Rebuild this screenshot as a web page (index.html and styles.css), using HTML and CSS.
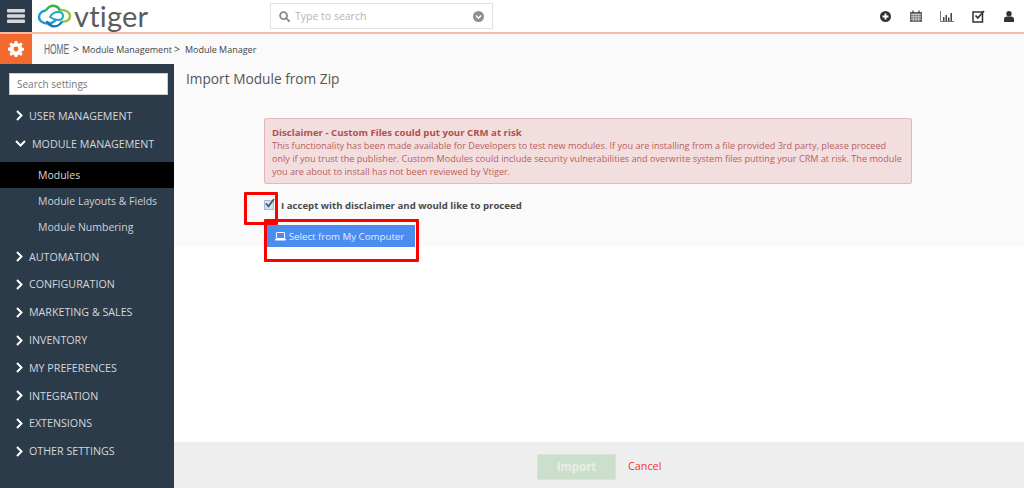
FILE: index.html
```html
<!DOCTYPE html>
<html lang="en">
<head>
<meta charset="utf-8">
<title>Import Module from Zip</title>
<link rel="stylesheet" href="styles.css">
</head>
<body>
<header class="topbar">
  <button class="menu-btn" aria-label="Menu">
    <svg width="18" height="14" viewBox="0 0 18 14"><path d="M1 0h16a1 1 0 0 1 1 1v1.500a1 1 0 0 1-1 1H1a1 1 0 0 1-1-1V1a1 1 0 0 1 1-1zM1 5.200h16a1 1 0 0 1 1 1v1.500a1 1 0 0 1-1 1H1a1 1 0 0 1-1-1V6.200a1 1 0 0 1 1-1zM1 10.400h16a1 1 0 0 1 1 1v1.500a1 1 0 0 1-1 1H1a1 1 0 0 1-1-1v-1.500a1 1 0 0 1 1-1z" fill="#d5d9dc"/></svg>
  </button>
  <div class="logo">
    <svg width="35" height="26" viewBox="0 0 35 26" fill="none" stroke-width="2.400">
      <path d="M9 7.500C5 8 2 10.500 2 14c0 4 4 6.500 9 6.500 3 0 6-1.500 8-4" stroke="#1c9ad6"/>
      <path d="M9 7.500C11 3.500 15 2 18 3c3 .8 4.500 3 5 5" stroke="#37b34a"/>
      <path d="M23 7c5-.5 10 2 10 6 0 4-4 6-8 5.500" stroke="#8cc63f"/>
      <path d="M25 18.500c-2 3.500-6 5.500-10 4.500-3-.8-4.500-3-5-5" stroke="#1279b8"/>
      <path d="M13 14c2-3.500 5-5 8-5 3 0 5 1.500 5 4s-2 4-5 4c-3 0-5-1-8-3z" stroke="#23a5c9" stroke-width="2"/>
    </svg>
    <span class="logo-text">vtiger</span>
  </div>
  <div class="global-search">
    <svg width="11" height="11" viewBox="0 0 12 12" fill="none" stroke="#8a8a8a" stroke-width="2"><circle cx="5" cy="5" r="3.800"/><path d="M8 8l3.200 3.200" stroke-linecap="round"/></svg>
    <span class="search-hint">Type to search</span>
    <svg class="search-caret" width="11" height="11" viewBox="0 0 12 12"><circle cx="6" cy="6" r="6" fill="#8f8f8f"/><path d="M3.200 5l2.800 2.800L8.800 5" fill="none" stroke="#fff" stroke-width="1.600"/></svg>
  </div>
  <nav class="top-icons">
    <svg width="11" height="11" viewBox="0 0 12 12"><circle cx="6" cy="6" r="6" fill="#333"/><path d="M6 2.800v6.400M2.800 6h6.400" stroke="#fff" stroke-width="2"/></svg>
    <svg width="12" height="12" viewBox="0 0 12 12"><path d="M0 2h12v10H0z" fill="#666"/><path d="M1 4.500h10M1 6.800h10M1 9.100h10M3.200 3.500v8M6 3.500v8M8.800 3.500v8" stroke="#ddd" stroke-width=".8"/><path d="M3 .5v2.500M9 .5v2.500" stroke="#333" stroke-width="1.200"/></svg>
    <svg width="14" height="11" viewBox="0 0 14 11"><path d="M.5 0v10.500H14" fill="none" stroke="#777" stroke-width="1"/><path d="M3 6h1.500v4H3zM5.500 4H7v6H5.500zM8 6.500h1.500V10H8zM10.500 2H12v8h-1.500z" fill="#444"/></svg>
    <svg width="13" height="13" viewBox="0 0 13 13"><path d="M1 2h9.500v10H1z" fill="none" stroke="#333" stroke-width="1.500"/><path d="M3.500 5.500l2.300 2.500L12 1" fill="none" stroke="#333" stroke-width="1.800"/></svg>
    <svg width="10" height="11" viewBox="0 0 10 11"><circle cx="5" cy="2.800" r="2.700" fill="#333"/><path d="M0 11V8c0-1.700 1.500-2.600 2.800-2.600h4.400C8.500 5.400 10 6.300 10 8v3z" fill="#333"/></svg>
  </nav>
</header>

<div class="crumbbar">
  <div class="gear-tile">
    <svg width="16" height="16" viewBox="0 0 16 16"><path d="M6.700 0h2.600l.4 2.200 1.300.6L12.900 1.500l1.800 1.800-1.300 1.900.6 1.300 2 .4v2.600l-2 .4-.6 1.300 1.300 1.900-1.800 1.800-1.900-1.300-1.300.6-.4 2H6.700l-.4-2-1.300-.6-1.900 1.300-1.800-1.800 1.300-1.900-.6-1.300-2-.4V6.700l2-.4.6-1.300L1.300 3.300l1.800-1.800L5 2.800l1.300-.6z" fill="#fff" fill-rule="evenodd"/><circle cx="8" cy="8" r="2.400" fill="#f26a2e"/></svg>
  </div>
  <div class="crumbs">
    <span class="crumb-home">HOME</span>
    <span class="crumb-sep">&gt;</span>
    <span class="crumb-mid">Module Management</span>
    <span class="crumb-sep tight">&gt;</span>
    <span class="crumb-end">Module Manager</span>
  </div>
</div>

<div class="shell">
  <aside class="sidebar">
    <div class="settings-search">Search settings</div>
    <ul class="menu">
      <li class="menu-head"><svg class="chev" viewBox="0 0 9 11"><path d="M2 1l4.500 4.500L2 10" /></svg>USER MANAGEMENT</li>
      <li class="menu-head open"><svg class="chev down" viewBox="0 0 11 9"><path d="M1 2l4.500 4.500L10 2" /></svg>MODULE MANAGEMENT</li>
      <li class="sub active">Modules</li>
      <li class="sub">Module Layouts &amp; Fields</li>
      <li class="sub last">Module Numbering</li>
      <li class="menu-head"><svg class="chev" viewBox="0 0 9 11"><path d="M2 1l4.500 4.500L2 10" /></svg>AUTOMATION</li>
      <li class="menu-head"><svg class="chev" viewBox="0 0 9 11"><path d="M2 1l4.500 4.500L2 10" /></svg>CONFIGURATION</li>
      <li class="menu-head"><svg class="chev" viewBox="0 0 9 11"><path d="M2 1l4.500 4.500L2 10" /></svg>MARKETING &amp; SALES</li>
      <li class="menu-head"><svg class="chev" viewBox="0 0 9 11"><path d="M2 1l4.500 4.500L2 10" /></svg>INVENTORY</li>
      <li class="menu-head"><svg class="chev" viewBox="0 0 9 11"><path d="M2 1l4.500 4.500L2 10" /></svg>MY PREFERENCES</li>
      <li class="menu-head"><svg class="chev" viewBox="0 0 9 11"><path d="M2 1l4.500 4.500L2 10" /></svg>INTEGRATION</li>
      <li class="menu-head"><svg class="chev" viewBox="0 0 9 11"><path d="M2 1l4.500 4.500L2 10" /></svg>EXTENSIONS</li>
      <li class="menu-head"><svg class="chev" viewBox="0 0 9 11"><path d="M2 1l4.500 4.500L2 10" /></svg>OTHER SETTINGS</li>
    </ul>
  </aside>

  <main class="content">
    <section class="panel">
      <h1 class="title">Import Module from Zip</h1>
      <div class="alert">
        <strong>Disclaimer - Custom Files could put your CRM at risk</strong><br>
        This functionality has been made available for Developers to test new modules. If you are installing from a file provided 3rd party, please proceed only if you trust the publisher. Custom Modules could include security vulnerabilities and overwrite system files putting your CRM at risk. The module you are about to install has not been reviewed by Vtiger.
      </div>
      <label class="accept">
        <span class="checkbox"><svg width="11" height="11" viewBox="0 0 11 11"><path d="M2 5.500l2.500 2.800L10 1" fill="none" stroke="#555" stroke-width="1.800"/></svg></span>
        I accept with disclaimer and would like to proceed
      </label>
      <button class="select-btn">
        <svg width="11" height="9" viewBox="0 0 11 9"><path d="M2 .5h7a.6.6 0 0 1 .6.6V6.500H1.400V1.100A.6.6 0 0 1 2 .5z" fill="none" stroke="#fff" stroke-width="1"/><path d="M0 7h11v.8a.6.6 0 0 1-.6.6H.6A.6.6 0 0 1 0 7.800z" fill="#fff"/></svg>
        Select from My Computer
      </button>
      <span class="callout callout-check"></span>
      <span class="callout callout-btn"></span>
    </section>
    <div class="spacer"></div>
    <footer class="actions">
      <button class="import-btn">Import</button>
      <a class="cancel">Cancel</a>
    </footer>
  </main>
</div>
</body>
</html>
```
FILE: styles.css
```css
* { box-sizing: border-box; }
html, body { margin: 0; height: 488px; overflow: hidden; }
body { font-family: "Open Sans", sans-serif; background: #fff; color: #444; display: flex; flex-direction: column; }
button { font-family: inherit; border: 0; padding: 0; }

.topbar { height: 34px; flex: none; display: flex; align-items: center; background: #fff; border-bottom: 2px solid #f9b9a3; position: relative; }
.menu-btn { width: 32px; height: 32px; background: #2c3b49; display: flex; align-items: center; justify-content: center; flex: none; align-self: flex-start; }
.logo { display: flex; align-items: center; margin-left: 5px; width: 233px; gap: 2px; flex: none; }
.logo-text { font-family: "Lato", sans-serif; font-size: 29px; line-height: 30px; color: #5c5c5c; font-weight: 400; letter-spacing: .2px; }
.global-search { width: 223px; height: 26px; border: 1px solid #e2e2e2; display: flex; align-items: center; padding: 0 8px; gap: 5px; flex: none; background: #fff; }
.search-hint { font-size: 10.500px; color: #b4b4b4; flex: 1; }
.top-icons { margin-left: auto; display: flex; align-items: center; gap: 16px; padding-right: 10px; height: 32px; }
.top-icons svg { display: block; }
.top-icons svg:nth-child(1) { margin-right: 3px; }
.top-icons svg:nth-child(2) { margin-right: 2px; }
.top-icons svg:nth-child(3) { margin-right: 2px; }
.top-icons svg:nth-child(4) { margin-right: 3px; }

.crumbbar { height: 30px; flex: none; display: flex; background: #fafafa; }
.gear-tile { width: 32px; background: #f26a2e; display: flex; align-items: center; justify-content: center; flex: none; }
.crumbs { display: flex; align-items: center; padding-left: 12px; font-size: 9px; color: #444; }
.crumb-home { font-family: "Liberation Sans", sans-serif; font-size: 14px; color: #5b6d7f; transform: scaleX(.6); transform-origin: left; width: 29px; }
.crumb-sep { font-size: 10.500px; margin-right: 3px; }
.crumb-sep.tight { margin-left: 2px; margin-right: 5px; }

.shell { flex: 1; display: flex; min-height: 0; }
.sidebar { width: 174px; flex: none; background: #2c3b49; padding-top: 9px; }
.settings-search { margin: 0 6px 0 9px; height: 22px; background: #fff; border: 1px solid #ccc; font-size: 10px; line-height: 20px; padding-left: 7px; color: #777; }
.menu { list-style: none; margin: 7px 0 0; padding: 0; }
.menu-head { height: 27.800px; display: flex; align-items: center; font-size: 10.700px; color: #d3d7db; padding-left: 15px; gap: 5px; }
.menu-head.open { height: 28px; margin-bottom: 4px; gap: 6px; }
.chev { width: 9px; height: 11px; fill: none; stroke: #fff; stroke-width: 2; flex: none; }
.chev.down { width: 11px; height: 9px; }
.sub { height: 26px; font-size: 10.500px; line-height: 26px; padding-left: 38px; color: #ccd1d6; }
.sub.active { background: #000; color: #d8d8d8; }
.sub.last { margin-bottom: 3px; }

.content { flex: 1; min-width: 0; display: flex; flex-direction: column; }
.panel { height: 183px; flex: none; background: #fafafa; padding: 5px 11px 0 90px; position: relative; }
.title { margin: 0 0 0 -78px; font-size: 13.700px; font-weight: 400; line-height: 20px; color: #555; }
.alert { margin-top: 29px; width: 648px; height: 66px; background: #f2dede; border: 1px solid #e6b6b8; border-radius: 2px; padding: 7px 7px 0; font-size: 9.100px; line-height: 13px; color: #b85f5d; }
.alert strong { font-weight: 700; font-size: 9.650px; color: #b0504e; }
.accept { display: flex; align-items: center; gap: 7px; margin-top: 14px; height: 14px; font-size: 9.650px; font-weight: 700; color: #4a4a4a; }
.checkbox { width: 10px; height: 10px; background: #cfe0fb; border: 1px solid #9db9e6; display: block; position: relative; flex: none; }
.checkbox svg { position: absolute; left: -1px; top: -3px; }
.select-btn { display: flex; align-items: center; justify-content: center; gap: 3px; margin-top: 13px; margin-left: 3px; width: 148px; height: 22px; padding-right: 3px; background: #4a8cf0; color: #e4eeff; font-size: 9.700px; white-space: nowrap; }
.callout { position: absolute; border: 3px solid #f00; border-radius: 1px; }
.callout-check { left: 70px; top: 128px; width: 34px; height: 33px; }
.callout-btn { left: 90px; top: 155px; width: 155px; height: 43px; }

.spacer { flex: 1; background: #fff; }
.actions { height: 46px; flex: none; background: #eeeeee; display: flex; align-items: center; padding-left: 363px; padding-top: 3px; gap: 12px; }
.import-btn { width: 79px; height: 26px; background: #cbdfcc; border: 1px solid #d6e5d6; color: #e8eee8; font-size: 11.500px; font-weight: 700; }
.cancel { font-size: 10.800px; color: #f23030; margin-top: -3px; }
```
